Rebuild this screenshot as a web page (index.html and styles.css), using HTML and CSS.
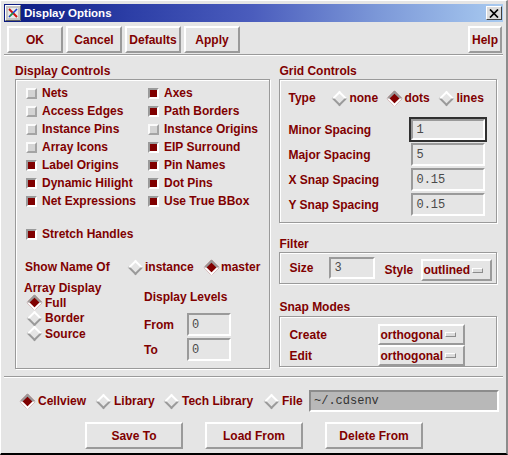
FILE: index.html
```html
<!DOCTYPE html>
<html lang="en">
<head>
<meta charset="utf-8">
<title>Display Options</title>
<link rel="stylesheet" href="styles.css">
</head>
<body>
<div class="window">
  <div class="titlebar">
    <span class="ticon">
      <svg width="16" height="16" viewBox="0 0 16 16">
        <rect x="0" y="0" width="16" height="16" fill="#c4c4c4"/>
        <path d="M0.5 15.5 V0.5 H15.5" fill="none" stroke="#fff"/>
        <path d="M0.5 15.5 H15.5 V0.5" fill="none" stroke="#606060"/>
        <rect x="3" y="3" width="10" height="10" fill="#e8e8e8"/>
        <path d="M4 4 L12 12" stroke="#d01010" stroke-width="2"/>
        <path d="M12 4 L4 12" stroke="#1a3cd0" stroke-width="1.6"/>
        <path d="M5 11 L8 8" stroke="#20a030" stroke-width="1.4"/>
      </svg>
    </span>
    <span class="ttext">Display Options</span>
    <span class="tclose">
      <svg width="10" height="9" viewBox="0 0 10 9"><path d="M1 0.5 L9 8.5 M9 0.5 L1 8.5" stroke="#000" stroke-width="1.7"/></svg>
    </span>
  </div>

  <div class="toolbar">
    <div class="btn tb">OK</div>
    <div class="btn tb">Cancel</div>
    <div class="btn tb">Defaults</div>
    <div class="btn tb">Apply</div>
    <div class="btn help">Help</div>
  </div>

  <div class="main">
    <div class="left">
      <div class="glabel">Display Controls</div>
      <div class="frame dcframe">
        <div class="checks">
          <div class="chk"><span class="cb"></span>Nets</div>
          <div class="chk"><span class="cb on"></span>Axes</div>
          <div class="chk"><span class="cb"></span>Access Edges</div>
          <div class="chk"><span class="cb on"></span>Path Borders</div>
          <div class="chk"><span class="cb"></span>Instance Pins</div>
          <div class="chk"><span class="cb"></span>Instance Origins</div>
          <div class="chk"><span class="cb"></span>Array Icons</div>
          <div class="chk"><span class="cb on"></span>EIP Surround</div>
          <div class="chk"><span class="cb on"></span>Label Origins</div>
          <div class="chk"><span class="cb on"></span>Pin Names</div>
          <div class="chk"><span class="cb on"></span>Dynamic Hilight</div>
          <div class="chk"><span class="cb on"></span>Dot Pins</div>
          <div class="chk"><span class="cb on"></span>Net Expressions</div>
          <div class="chk"><span class="cb on"></span>Use True BBox</div>
        </div>
        <div class="chk stretch"><span class="cb on"></span>Stretch Handles</div>
        <div class="showname">
          <span class="snlabel">Show Name Of</span>
          <span class="ritem w-inst"><span class="radio"></span>instance</span>
          <span class="ritem"><span class="radio on"></span>master</span>
        </div>
        <div class="lower">
          <div class="arr">
            <div class="sublabel">Array Display</div>
            <div class="rrow"><span class="radio on"></span>Full</div>
            <div class="rrow"><span class="radio"></span>Border</div>
            <div class="rrow"><span class="radio"></span>Source</div>
          </div>
          <div class="levels">
            <div class="sublabel">Display Levels</div>
            <div class="lrow first"><span class="llabel">From</span><span class="field f-lvl">0</span></div>
            <div class="lrow"><span class="llabel">To</span><span class="field f-lvl">0</span></div>
          </div>
        </div>
      </div>
    </div>

    <div class="right">
      <div class="glabel">Grid Controls</div>
      <div class="frame gridframe">
        <div class="typerow">
          <span class="typelabel">Type</span>
          <span class="ritem w-none"><span class="radio"></span>none</span>
          <span class="ritem w-dots"><span class="radio on"></span>dots</span>
          <span class="ritem"><span class="radio"></span>lines</span>
        </div>
        <div class="sprows">
          <div class="sprow"><span class="splabel">Minor Spacing</span><span class="field f-sp f-focus">1</span></div>
          <div class="sprow"><span class="splabel">Major Spacing</span><span class="field f-sp">5</span></div>
          <div class="sprow"><span class="splabel">X Snap Spacing</span><span class="field f-sp">0.15</span></div>
          <div class="sprow"><span class="splabel">Y Snap Spacing</span><span class="field f-sp">0.15</span></div>
        </div>
      </div>

      <div class="glabel lbl-filter">Filter</div>
      <div class="frame filterframe">
        <span class="flabel f-size">Size</span>
        <span class="field f-sz">3</span>
        <span class="flabel f-style">Style</span>
        <span class="opt o-style">outlined<span class="ind"></span></span>
      </div>

      <div class="glabel lbl-snap">Snap Modes</div>
      <div class="frame snapframe">
        <div class="smrow"><span class="smlabel">Create</span><span class="opt o-snap">orthogonal<span class="ind"></span></span></div>
        <div class="smrow"><span class="smlabel">Edit</span><span class="opt o-snap">orthogonal<span class="ind"></span></span></div>
      </div>
    </div>
  </div>

  <div class="bottom">
    <div class="brow">
      <span class="ritem bi w-cell"><span class="radio on"></span>Cellview</span>
      <span class="ritem bi w-lib"><span class="radio"></span>Library</span>
      <span class="ritem bi w-tech"><span class="radio"></span>Tech Library</span>
      <span class="ritem bi w-file"><span class="radio"></span>File</span>
      <span class="pathfield">~/.cdsenv</span>
    </div>
    <div class="bbuttons">
      <div class="btn bb">Save To</div>
      <div class="btn bb">Load From</div>
      <div class="btn bb">Delete From</div>
    </div>
  </div>
</div>
</body>
</html>
```

FILE: styles.css
```css
* { box-sizing: border-box; }
html, body { margin: 0; padding: 0; }
body {
  width: 508px;
  height: 455px;
  overflow: hidden;
  background: #e5e5e5;
  font-family: "Liberation Sans", Arial, sans-serif;
  font-size: 12px;
  font-weight: bold;
  color: #800000;
}

.window {
  width: 508px;
  height: 455px;
  border-top: 1px solid #fff;
  border-left: 1px solid #fff;
  border-right: 2px solid #8c8c8c;
  border-bottom: 2px solid #000;
  padding: 3px 3px 0 3px;
  display: flex;
  flex-direction: column;
  background: #e5e5e5;
}

/* title bar */
.titlebar {
  height: 18px;
  flex: none;
  display: flex;
  align-items: center;
  background: linear-gradient(90deg, #0a1a80 0%, #2c3ea6 25%, #4b5dbd 50%, #7c98d8 75%, #a8caf0 100%);
  color: #fff;
}
.ticon { width: 16px; height: 16px; margin-left: 1px; display: flex; }
.ttext { margin-left: 3px; line-height: 18px; font-size: 11.5px; }
.tclose {
  margin-left: auto;
  margin-right: 1px;
  width: 16px;
  height: 14px;
  background: #dcdcdc;
  border: 1px solid;
  border-color: #fff #404040 #404040 #fff;
  display: flex;
  align-items: center;
  justify-content: center;
}

/* buttons */
.btn {
  height: 27px;
  display: flex;
  align-items: center;
  justify-content: center;
  border: 2px solid;
  border-color: #fff #9a9a9a #9a9a9a #fff;
  background: #e5e5e5;
  white-space: nowrap;
}
.toolbar {
  height: 33px;
  flex: none;
  display: flex;
  gap: 3px;
  padding: 4px 1px 0 3px;
  border-bottom: 1px solid #9a9a9a;
}
.tb { width: 56px; }
.help { width: 34px; margin-left: auto; }

/* main */
.main {
  height: 322px;
  flex: none;
  display: flex;
  gap: 9px;
  padding: 8px 6px 0 11px;
  border-top: 1px solid #fff;
  border-bottom: 1px solid #9a9a9a;
}
.left { width: 256px; }
.right { width: 218px; }

.glabel { height: 14px; line-height: 14px; margin-bottom: 1px; white-space: nowrap; }
.frame {
  border: 1px solid #9a9a9a;
  box-shadow: inset 1px 1px 0 #fff, 1px 1px 0 #fff;
}

.dcframe { height: 290px; padding-top: 4px; }
.checks {
  display: grid;
  grid-template-columns: 122px 1fr;
  grid-auto-rows: 18px;
  padding-left: 10px;
}
.chk { display: flex; align-items: center; gap: 5px; white-space: nowrap; }
.cb {
  width: 11px;
  height: 11px;
  flex: none;
  border: 2px solid;
  border-color: #fbfbfb #a4a4a4 #a4a4a4 #fbfbfb;
  background: #d4d4d4;
}
.cb.on {
  border-color: #9a9a9a #fff #fff #9a9a9a;
  background: #800000;
}
.stretch { height: 18px; margin-top: 15px; padding-left: 10px; }

.showname {
  height: 18px;
  margin-top: 15px;
  padding-left: 9px;
  display: flex;
  align-items: center;
  white-space: nowrap;
}
.snlabel { width: 103px; }

.ritem { display: flex; align-items: center; gap: 2px; white-space: nowrap; }
.w-inst { width: 76px; }
.radio {
  width: 15px;
  height: 15px;
  flex: none;
  display: inline-flex;
  align-items: center;
  justify-content: center;
}
.radio::before {
  content: "";
  width: 11px;
  height: 11px;
  box-sizing: border-box;
  border: 2px solid;
  border-color: #fff #9a9a9a #9a9a9a #fff;
  transform: rotate(45deg);
}
.radio.on::before {
  border-color: #9a9a9a #fff #fff #9a9a9a;
  background: #800000;
}

.lower { display: flex; margin-top: 5px; padding-left: 8px; }
.arr { width: 120px; }
.sublabel { height: 14px; line-height: 14px; white-space: nowrap; }
.rrow { height: 15.5px; display: flex; align-items: center; gap: 3px; padding-left: 3px; }
.levels { padding-top: 9px; }
.lrow { display: flex; align-items: center; height: 23px; margin-top: 2px; }
.lrow.first { margin-top: 9px; }
.llabel { width: 43px; }

.field {
  height: 23px;
  border: 2px solid;
  border-color: #9a9a9a #fff #fff #9a9a9a;
  font-family: "Liberation Mono", "Courier New", monospace;
  font-weight: normal;
  font-size: 12px;
  color: #4a4a4a;
  padding-left: 3px;
  display: flex;
  align-items: center;
  flex: none;
}
.f-lvl { width: 44px; }

/* grid controls */
.gridframe { height: 144px; padding: 9px 0 0 8px; }
.typerow { height: 18px; display: flex; align-items: center; }
.typelabel { width: 44px; }
.w-none { width: 55px; }
.w-dots { width: 52px; }
.sprows { margin-top: 11px; display: flex; flex-direction: column; gap: 2px; }
.sprow { height: 23px; display: flex; align-items: center; white-space: nowrap; }
.splabel { width: 123px; }
.f-sp { width: 74px; }
.f-focus { height: 21px; box-shadow: 0 0 0 2px #303030; }

/* filter */
.lbl-filter { margin-top: 14px; }
.filterframe {
  height: 32px;
  margin-top: 1px;
  padding-left: 9px;
  display: flex;
  align-items: flex-start;
}
.flabel { line-height: 22px; height: 22px; }
.f-size { width: 40px; margin-top: 4px; }
.f-sz { width: 46px; height: 22px; margin-top: 4px; }
.f-style { width: 37px; margin-left: 9px; margin-top: 6px; }

.opt {
  display: flex;
  align-items: center;
  height: 22px;
  border: 2px solid;
  border-color: #fff #9a9a9a #9a9a9a #fff;
  white-space: nowrap;
  flex: none;
}
.o-style { width: 71px; margin-top: 6px; }
.ind {
  width: 11px;
  height: 5px;
  margin-left: auto;
  margin-right: 7px;
  border: 1px solid;
  border-color: #fff #8c8c8c #8c8c8c #fff;
  background: #dcdcdc;
}

/* snap modes */
.lbl-snap { margin-top: 16px; }
.snapframe { height: 51px; margin-top: 2px; padding: 7px 0 0 9px; }
.smrow { display: flex; align-items: center; height: 21px; }
.smlabel { width: 89px; }
.o-snap { width: 87px; height: 21px; }

/* bottom */
.bottom {
  flex: 1;
  border-top: 1px solid #fff;
  padding: 12px 0 0 16px;
}
.brow { display: flex; align-items: center; height: 22px; }
.bi { gap: 3px; }
.w-cell { width: 76px; }
.w-lib { width: 68px; }
.w-tech { width: 100px; }
.w-file { width: 45px; }
.pathfield {
  width: 190px;
  height: 22px;
  background: #b8b8b8;
  border: 2px solid;
  border-color: #8c8c8c #fff #fff #8c8c8c;
  font-family: "Liberation Mono", "Courier New", monospace;
  font-weight: normal;
  font-size: 12px;
  color: #333;
  padding-left: 3px;
  display: flex;
  align-items: center;
}
.bbuttons { display: flex; gap: 22px; margin-top: 10px; padding-left: 65px; }
.bb { width: 98px; }
```
